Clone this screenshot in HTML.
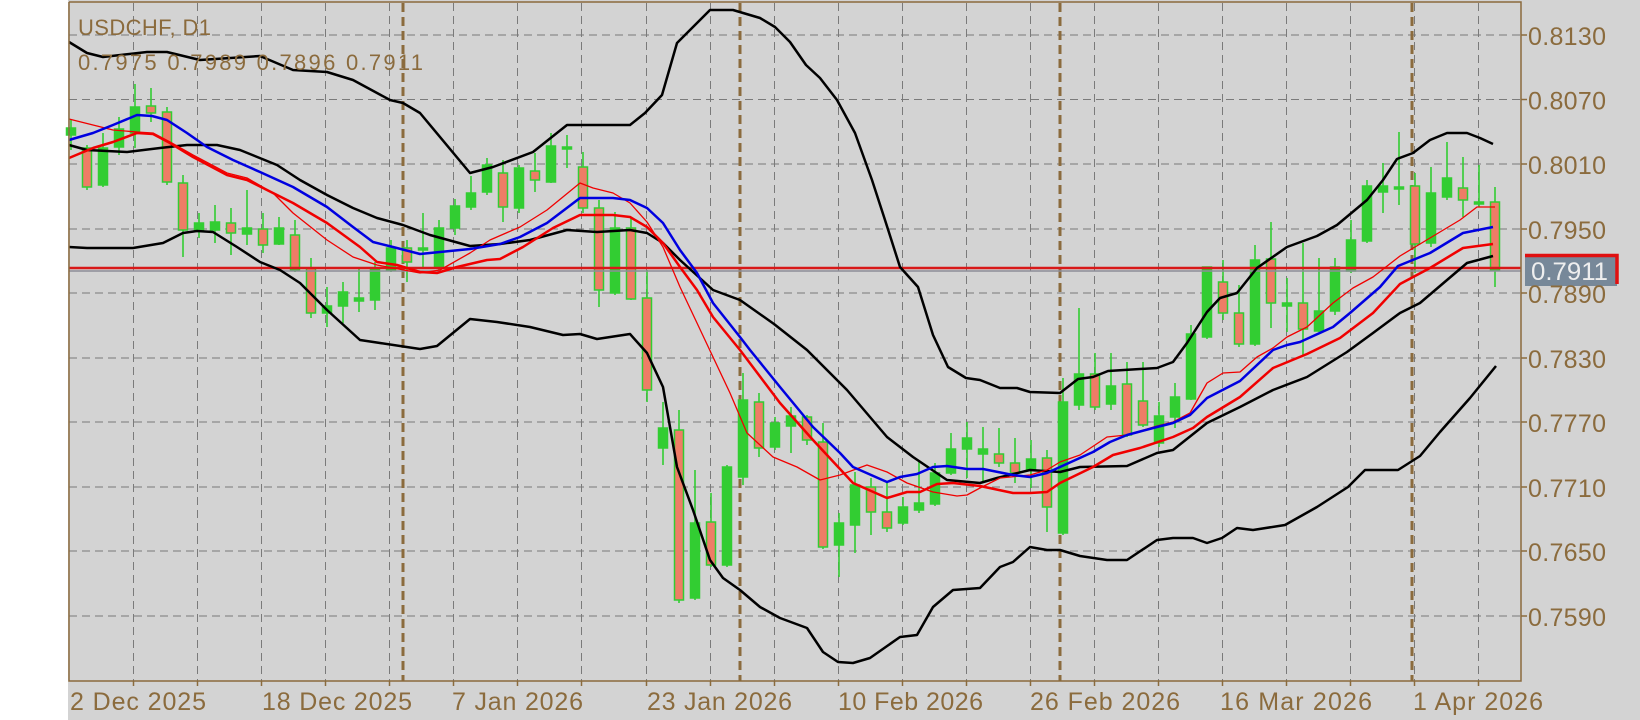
<!DOCTYPE html>
<html><head><meta charset="utf-8"><style>
html,body{margin:0;padding:0;background:#fff;}
svg{display:block;}
text{font-family:"Liberation Sans",sans-serif;fill:#8b6b3d;}
</style></head><body>
<svg id="c" width="1640" height="720" xmlns="http://www.w3.org/2000/svg">
<rect x="68" y="0" width="1572" height="720" fill="#d3d3d3"/>
<g id="grid" stroke="#7a7a7a" stroke-width="1" stroke-dasharray="8,5" fill="none"></g>
<g stroke="#8b6b3d" stroke-width="3" stroke-dasharray="9,5">
<line x1="403" y1="3" x2="403" y2="681"/><line x1="740" y1="3" x2="740" y2="681"/>
<line x1="1060" y1="3" x2="1060" y2="681"/><line x1="1412" y1="3" x2="1412" y2="681"/>
</g>
<g id="candles"></g>
<line x1="69" y1="271" x2="1521" y2="271" stroke="#8c8c98" stroke-width="1.5"/>
<line x1="69" y1="268" x2="1521" y2="268" stroke="#d81818" stroke-width="2.5"/>
<g fill="none" stroke-linejoin="round">
<polyline stroke="#000" stroke-width="2.5" points="69,42 87,53 103,57 147,52 167,52 200,60 260,56 293,70 327,72 353,80 390,100 403,103 420,113 470,173 493,167 533,152 567,125 630,125 645,113 662,95 677,43 710,10 733,10 760,18 775,27 790,42 806,65 820,78 837,100 855,133 872,180 885,220 900,267 918,287 933,335 948,367 966,378 980,380 1000,388 1017,388 1030,392 1060,393 1078,379 1093,377 1108,371 1157,368 1173,362 1187,343 1207,312 1220,298 1237,293 1257,268 1287,247 1317,236 1337,225 1367,200 1383,180 1397,159 1413,153 1430,140 1447,133 1467,133 1480,138 1493,144"/>
<polyline stroke="#000" stroke-width="2.5" points="69,145 87,150 127,152 160,148 187,145 217,145 240,150 277,165 300,180 327,195 353,208 377,218 403,225 430,235 470,246 500,244 530,240 567,230 597,232 630,230 647,233 663,243 680,260 713,290 740,300 774,324 807,350 847,390 887,437 913,457 947,480 980,483 997,478 1030,470 1060,472 1080,467 1127,466 1157,453 1173,450 1207,423 1240,407 1273,390 1307,377 1347,352 1373,333 1400,313 1420,303 1467,263 1493,256"/>
<polyline stroke="#000" stroke-width="2.5" points="69,247 87,248 133,248 163,243 183,233 197,231 213,232 237,247 260,262 280,270 300,283 327,310 360,340 380,343 420,349 437,346 470,319 497,322 530,327 563,335 580,334 597,339 630,334 647,353 663,387 677,467 693,510 710,560 723,578 740,590 760,607 780,618 807,628 823,652 838,662 853,663 870,658 900,637 917,635 933,607 953,590 980,588 1000,567 1013,562 1030,547 1047,550 1060,550 1080,556 1107,560 1127,560 1157,540 1173,538 1193,538 1207,543 1222,538 1237,528 1253,530 1285,525 1317,507 1348,487 1365,470 1398,470 1420,456 1440,432 1470,398 1496,366"/>
<polyline stroke="#f00000" stroke-width="1.3" points="69,119 93,125 113,130 137,132 153,133 170,142 193,155 227,173 247,178 273,193 293,213 327,240 353,257 377,265 420,273 440,270 470,253 490,240 520,227 547,210 580,183 593,188 613,193 630,203 647,222 663,247 680,287 697,323 713,357 730,393 747,433 773,457 797,467 820,480 840,475 867,465 887,472 907,483 933,492 957,496 967,495 980,488 1000,478 1030,475 1047,470 1060,462 1080,455 1107,437 1127,435 1157,426 1173,422 1190,413 1207,383 1223,373 1240,372 1257,357 1273,348 1287,337 1307,327 1333,303 1353,288 1373,277 1400,256 1430,238 1460,220 1477,207 1495,207"/>
<polyline stroke="#f00000" stroke-width="2.5" points="69,158 93,148 113,142 137,133 153,134 170,143 193,157 227,175 247,180 267,190 293,203 327,223 360,247 377,262 397,265 420,272 437,273 457,267 487,260 500,259 523,247 553,228 580,215 613,215 630,217 647,227 663,243 680,267 697,290 713,317 740,350 780,403 813,440 853,483 887,498 907,492 920,492 937,484 953,483 980,486 1013,493 1030,493 1047,492 1060,483 1093,467 1113,455 1140,448 1173,437 1193,428 1207,417 1240,397 1273,368 1307,354 1340,338 1373,313 1400,284 1430,268 1463,248 1493,244"/>
<polyline stroke="#0000e0" stroke-width="2.5" points="69,140 93,133 113,125 137,115 152,116 167,120 187,133 207,147 233,160 260,172 293,187 327,207 353,227 373,242 393,247 420,254 470,249 500,244 520,237 547,223 580,198 613,198 630,200 647,208 663,223 680,250 697,273 713,303 740,337 750,350 780,387 813,427 840,453 853,467 887,482 900,477 917,474 933,467 947,466 967,469 983,469 1013,475 1030,477 1047,473 1060,467 1093,452 1110,442 1127,435 1157,427 1173,423 1190,415 1207,398 1240,381 1273,350 1287,345 1300,342 1333,327 1350,313 1380,287 1398,266 1430,253 1463,233 1493,227"/>
</g>
<g stroke="#8b6b3d" stroke-width="1.5" fill="none">
<polyline points="69,2 1521,2 1521,681 69,681 69,2"/>
</g>
<g id="ticks" stroke="#8b6b3d" stroke-width="1.5"></g>
<rect x="1525" y="254" width="92" height="32" fill="#778899"/>
<polyline points="1525,255.5 1617,255.5 1617,284" fill="none" stroke="#e01010" stroke-width="3.5"/>
<text x="1531" y="280" font-size="25" textLength="77" lengthAdjust="spacingAndGlyphs" style="fill:#eeeeee">0.7911</text>
<text x="78" y="35" font-size="22" textLength="133" lengthAdjust="spacing">USDCHF, D1</text>
<text x="78" y="70" font-size="22" textLength="345" lengthAdjust="spacing">0.7975 0.7989 0.7896 0.7911</text>
<g font-size="25">
<text x="1528" y="45" textLength="78" lengthAdjust="spacing">0.8130</text>
<text x="1528" y="109.5" textLength="78" lengthAdjust="spacing">0.8070</text>
<text x="1528" y="174" textLength="78" lengthAdjust="spacing">0.8010</text>
<text x="1528" y="239" textLength="78" lengthAdjust="spacing">0.7950</text>
<text x="1528" y="303" textLength="78" lengthAdjust="spacing">0.7890</text>
<text x="1528" y="368" textLength="78" lengthAdjust="spacing">0.7830</text>
<text x="1528" y="432" textLength="78" lengthAdjust="spacing">0.7770</text>
<text x="1528" y="497" textLength="78" lengthAdjust="spacing">0.7710</text>
<text x="1528" y="561" textLength="78" lengthAdjust="spacing">0.7650</text>
<text x="1528" y="626" textLength="78" lengthAdjust="spacing">0.7590</text>
<text x="70" y="710" textLength="136" lengthAdjust="spacing">2 Dec 2025</text>
<text x="262" y="710" textLength="150" lengthAdjust="spacing">18 Dec 2025</text>
<text x="452" y="710" textLength="131" lengthAdjust="spacing">7 Jan 2026</text>
<text x="647" y="710" textLength="145" lengthAdjust="spacing">23 Jan 2026</text>
<text x="838" y="710" textLength="145" lengthAdjust="spacing">10 Feb 2026</text>
<text x="1030" y="710" textLength="150" lengthAdjust="spacing">26 Feb 2026</text>
<text x="1220" y="710" textLength="152" lengthAdjust="spacing">16 Mar 2026</text>
<text x="1413" y="710" textLength="130" lengthAdjust="spacing">1 Apr 2026</text>
</g>
</svg>
<script>
var NS="http://www.w3.org/2000/svg";
function el(p,t,a){var e=document.createElementNS(NS,t);for(var k in a)e.setAttribute(k,a[k]);p.appendChild(e);return e;}
var g=document.getElementById('grid');
var hy=[35,99.5,164,229,293,358,422,487,551,616];
hy.forEach(function(y){el(g,'line',{x1:69,y1:y,x2:1521,y2:y});});
var tk=document.getElementById('ticks');
hy.forEach(function(y){el(tk,'line',{x1:1521,y1:y,x2:1527,y2:y});});
for(var k=0;k<22;k++){var x=Math.round(133+64.07*k)+0.5;el(g,'line',{x1:x,y1:3,x2:x,y2:681});el(tk,'line',{x1:x,y1:681,x2:x,y2:686});}
var D=[[135,128,120,150],[148,187,145,190],[185,148,133,187],[147,129,117,155],[133,107,84,148],[106,113,88,122],[112,182,107,185],[183,230,175,257],[230,223,213,238],[230,222,205,243],[223,233,208,255],[234,228,190,245],[229,245,213,253],[244,228,217,245],[235,270,220,272],[268,313,258,318],[313,306,287,327],[306,292,282,323],[301,298,267,312],[300,268,262,310],[270,248,240,272],[248,262,240,282],[250,248,213,267],[268,228,220,272],[228,206,199,235],[207,193,176,210],[192,165,158,195],[173,207,160,222],[208,168,165,213],[171,180,153,192],[182,146,133,183],[148,147,135,168],[167,208,152,213],[208,290,200,307],[293,228,212,295],[228,299,218,300],[298,390,270,402],[448,428,402,465],[430,600,410,603],[598,523,470,600],[522,565,493,567],[565,467,465,567],[477,400,373,485],[402,448,393,457],[447,423,417,450],[426,416,407,453],[417,440,415,445],[442,547,423,549],[545,523,513,577],[525,485,472,553],[487,512,478,535],[512,528,483,532],[523,507,497,525],[510,503,460,513],[504,473,463,506],[473,449,433,475],[449,438,422,478],[454,449,427,482],[454,463,428,467],[463,473,438,483],[470,459,440,488],[458,507,450,532],[533,402,378,535],[405,374,308,410],[374,407,353,410],[404,386,353,410],[384,435,362,437],[401,425,362,427],[443,416,402,447],[417,397,383,428],[399,334,325,400],[337,267,267,339],[282,313,260,320],[313,344,285,347],[344,260,245,346],[259,303,222,328],[306,303,278,332],[303,329,243,355],[331,311,258,332],[311,267,258,315],[271,240,220,273],[241,186,180,243],[192,186,163,213],[188,187,132,205],[186,244,173,273],[243,193,167,247],[197,178,142,200],[188,200,157,217],[204,202,165,207],[202,270,187,287]];
var cg=document.getElementById('candles');
D.forEach(function(d,i){var x=71+16*i;var o=d[0],c=d[1],h=d[2],l=d[3];
el(cg,'line',{x1:x,y1:h,x2:x,y2:l,stroke:'#32cd32','stroke-width':1.6});
var t=Math.min(o,c),b=Math.max(o,c);if(b-t<2)b=t+2;
el(cg,'rect',{x:x-4.5,y:t,width:9,height:b-t,fill:(c<o?'#32cd32':'#ee7d66'),stroke:'#32cd32','stroke-width':1.5});});
</script>
</body></html>
